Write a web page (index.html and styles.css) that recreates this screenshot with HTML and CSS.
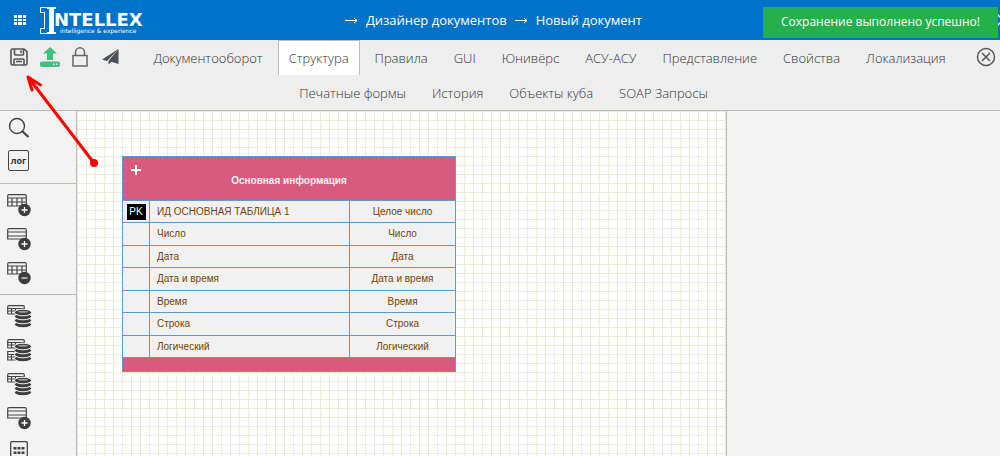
FILE: index.html
```html
<!DOCTYPE html>
<html lang="ru">
<head>
<meta charset="utf-8">
<title>Новый документ</title>
<link rel="stylesheet" href="styles.css">
</head>
<body>
<svg class="defs" aria-hidden="true">
  <defs>
    <g id="grid-table">
      <path d="M.7 12V2q0-1.3 1.3-1.3h16q1.3 0 1.3 1.3v10z" fill="#f3f3f3"/>
      <path d="M.7 12V2q0-1.3 1.3-1.3h16q1.3 0 1.3 1.3v10zM1 4h18M1 8h18M5 4v8M10 4v8M15 4v8" fill="none" stroke="#444" stroke-width="1.2"/>
    </g>
    <g id="row-table">
      <path d="M.7 11V2q0-1.3 1.3-1.3h16q1.3 0 1.3 1.3v9zM1 4h18M1 8h18" fill="none" stroke="#444" stroke-width="1.2"/>
    </g>
    <g id="plus">
      <circle cx="17.500" cy="16" r="6.200" fill="#3d3d3d"/>
      <path d="M17.500 13v6M14.500 16h6" stroke="#fff" stroke-width="1.300"/>
    </g>
    <g id="minus">
      <circle cx="17.500" cy="16" r="6.200" fill="#3d3d3d"/>
      <path d="M14.500 16h6" stroke="#ccc" stroke-width="1.500"/>
    </g>
    <g id="stack" fill="#3d3d3d" stroke="#f3f3f3">
      <ellipse cx="16" cy="19.500" rx="8.500" ry="3.300"/>
      <ellipse cx="16" cy="15.500" rx="8.500" ry="3.300"/>
      <ellipse cx="16" cy="11.500" rx="8.500" ry="3.300"/>
      <ellipse cx="16" cy="7.500" rx="8.500" ry="3.300"/>
      <ellipse cx="16" cy="6.700" rx="5" ry="1" stroke="none" fill="#999"/>
    </g>
  </defs>
</svg>

<header class="header">
  <button class="icon-button apps" aria-label="Меню">
    <svg width="12" height="10" fill="#fff"><path d="M0 0h3v3H0zM4 0h4v3H4zM9 0h3v3H9zM0 4h3v2H0zM4 4h4v2H4zM9 4h3v2H9zM0 7h3v3H0zM4 7h4v3H4zM9 7h3v3H9z"/></svg>
  </button>
  <a class="logo" href="#">
    <svg class="logo-mark" width="17" height="27" fill="none" stroke="#fff"><path d="M7 1h9M7 26h9" stroke-width="2"/><path d="M11.500 0v27" stroke-width="5"/><path d="M7 .5H.5v5h4v16h-4v5H7" stroke-width="1"/></svg>
    <span class="logo-text"><span class="logo-name">NTELLEX</span><span class="logo-tag">intelligence &amp; experience</span></span>
  </a>
  <nav class="crumbs" aria-label="Навигация">
    <svg class="arrow" width="13" height="7"><path d="M0 3.500h12M9 1l3 2.500L9 6" fill="none" stroke="#fff"/></svg>
    <a href="#">Дизайнер документов</a>
    <svg class="arrow" width="13" height="7"><path d="M0 3.500h12M9 1l3 2.500L9 6" fill="none" stroke="#fff"/></svg>
    <a href="#">Новый документ</a>
  </nav>
  <svg class="edge" width="12" height="14"><path d="M0 1l12 12M12 1L0 13" stroke="#fff" stroke-width="1.500"/></svg>
  <div class="toast" role="status">Сохранение выполнено успешно!</div>
</header>

<div class="toolbar">
  <div class="actions">
    <button class="icon-button" aria-label="Сохранить">
      <svg width="18" height="18" fill="none" stroke="#555" stroke-width="1.600"><path d="M1 2.500Q1 1 2.500 1H14l3 2.500v12q0 1.500-1.500 1.500h-13Q1 17 1 15.500zM4.500 1v5q0 1 1 1h7q1 0 1-1V1M4 17v-5q0-1 1-1h8q1 0 1 1v5M11 2.500v2.500M6 13.500h6"/></svg>
    </button>
    <button class="icon-button" aria-label="Опубликовать">
      <svg width="20" height="20" fill="#41bf83"><path d="M10 0l7 6.500h-4V13H7V6.500H3z"/><path fill-rule="evenodd" d="M2.500 14.500h15a2.500 2.500 0 0 1 0 5.500h-15a2.500 2.500 0 0 1 0-5.500zM13 16.500v1.500h1.500v-1.500zM16 16.500v1.500h1.500v-1.500z"/></svg>
    </button>
    <button class="icon-button" aria-label="Заблокировать">
      <svg width="16" height="20" fill="none" stroke="#666" stroke-width="1.500"><path d="M1 8.500h14V19H1zM3.500 8.500V5.500a4.500 4.700 0 0 1 9 0v3"/></svg>
    </button>
    <button class="icon-button send" aria-label="Отправить">
      <svg width="19" height="16"><path d="M18.500 0L2 10.500l5 1.500zM18.500 0L8.500 12v3.500l2.500-2.500zM18.500 0L10.500 12.500l8 2.500z" fill="#4c4f55"/></svg>
    </button>
  </div>
  <nav class="tabs" aria-label="Разделы">
    <div class="tab-row">
      <a href="#">Документооборот</a><a class="active" href="#" aria-current="page">Структура</a><a href="#">Правила</a><a href="#">GUI</a><a href="#">Юнивёрс</a><a href="#">АСУ-АСУ</a><a href="#">Представление</a><a href="#">Свойства</a><a href="#">Локализация</a>
    </div>
    <div class="tab-row second">
      <a href="#">Печатные формы</a><a href="#">История</a><a href="#">Объекты куба</a><a href="#">SOAP Запросы</a>
    </div>
  </nav>
  <button class="icon-button close" aria-label="Закрыть">
    <svg width="20" height="20" fill="none" stroke="#555" stroke-width="1.500"><circle cx="10" cy="10" r="8.500"/><path d="M6 6l8 8M14 6l-8 8"/></svg>
  </button>
</div>

<main class="workspace">
  <aside class="sidebar">
    <div class="tools top">
      <button class="icon-button" aria-label="Поиск"><svg width="24" height="22" fill="none" stroke="#444"><circle cx="10" cy="9" r="7.500" stroke-width="1.400"/><path d="M15 14l6.500 6" stroke-width="2.200"/></svg></button>
      <button class="icon-button log" aria-label="Лог">лог</button>
    </div>
    <div class="tools middle">
      <button class="icon-button" aria-label="Добавить таблицу"><svg width="25" height="23"><use href="#grid-table"/><use href="#plus"/></svg></button>
      <button class="icon-button" aria-label="Добавить строку"><svg width="25" height="23"><use href="#row-table"/><use href="#plus"/></svg></button>
      <button class="icon-button" aria-label="Удалить таблицу"><svg width="25" height="23"><use href="#grid-table"/><use href="#minus"/></svg></button>
    </div>
    <div class="tools bottom">
      <button class="icon-button" aria-label="Таблица в базу"><svg width="25" height="23"><path d="M.7 9V2q0-1.3 1.300-1.300h14q1.300 0 1.300 1.300v3M1 3.500h16M1 6h10M.7 9H9M4.500 4v5M8.500 4v5" fill="none" stroke="#444" stroke-width="1.200"/><use href="#stack"/></svg></button>
      <button class="icon-button" aria-label="Таблицы в базу"><svg width="25" height="23"><path d="M.7 9V2q0-1.3 1.300-1.300h14q1.300 0 1.300 1.300v3M1 3.500h16M1 6h10M.7 9H9M4.500 4v5M8.500 4v5M9 12.500H.7V21H9M1 15.500h8M1 18h8M4.500 15v6" fill="none" stroke="#444" stroke-width="1.200"/><use href="#stack"/></svg></button>
      <button class="icon-button" aria-label="Таблица из базы"><svg width="25" height="23"><path d="M.7 9V2q0-1.3 1.300-1.300h14q1.300 0 1.300 1.300v3M1 3.500h16M1 6h10M.7 9H9M4.500 4v5M8.500 4v5" fill="none" stroke="#444" stroke-width="1.200"/><use href="#stack"/></svg></button>
      <button class="icon-button" aria-label="Новая строка"><svg width="25" height="23"><use href="#row-table"/><use href="#plus"/></svg></button>
      <button class="icon-button keypad" aria-label="Сетка"><svg width="18" height="22"><rect x=".7" y=".7" width="16.600" height="20.600" rx="1" fill="none" stroke="#444" stroke-width="1.300"/><path d="M3.500 6h3v2.500h-3zM7.500 6h3v2.500h-3zM11.500 6h3v2.500h-3zM3.500 10.500h3V13h-3zM7.500 10.500h3V13h-3zM11.500 10.500h3V13h-3z" fill="#444"/></svg></button>
    </div>
  </aside>
  <section class="canvas">
    <table class="entity">
      <colgroup><col class="col-key"><col class="col-name"><col class="col-type"></colgroup>
      <thead>
        <tr><th colspan="3"><button class="icon-button add" aria-label="Добавить поле"><svg width="10" height="10"><path d="M5 0v10M0 5h10" stroke="#fff" stroke-width="2"/></svg></button>Основная информация</th></tr>
      </thead>
      <tbody>
        <tr><td><span class="pk">PK</span></td><td class="name">ИД ОСНОВНАЯ ТАБЛИЦА 1</td><td class="type">Целое число</td></tr>
        <tr><td></td><td class="name">Число</td><td class="type">Число</td></tr>
        <tr><td></td><td class="name">Дата</td><td class="type">Дата</td></tr>
        <tr><td></td><td class="name">Дата и время</td><td class="type">Дата и время</td></tr>
        <tr><td></td><td class="name">Время</td><td class="type">Время</td></tr>
        <tr><td></td><td class="name">Строка</td><td class="type">Строка</td></tr>
        <tr><td></td><td class="name">Логический</td><td class="type">Логический</td></tr>
      </tbody>
      <tfoot><tr><td colspan="3"></td></tr></tfoot>
    </table>
  </section>
  <aside class="details"></aside>
</main>

<svg class="pointer" width="76" height="96" aria-hidden="true"><path d="M69 88L3 2M3 2l4 13M3 2l12.500 8" fill="none" stroke="#f00" stroke-width="3" stroke-linecap="round"/><circle cx="69" cy="88" r="4" fill="#f00"/></svg>
</body>
</html>
```
FILE: styles.css
```css
* { box-sizing: border-box; }

body {
  margin: 0;
  height: 100vh;
  display: flex;
  flex-direction: column;
  overflow: hidden;
  position: relative;
  font: 13px/18px "Open Sans", sans-serif;
  color: #333;
  background: #f3f3f3;
}

a { color: inherit; text-decoration: none; }
svg { display: block; flex: none; }
.defs { position: absolute; width: 0; height: 0; }

.icon-button {
  display: block;
  padding: 0;
  border: 0;
  background: none;
  cursor: pointer;
}

.header {
  position: relative;
  flex: none;
  display: flex;
  align-items: center;
  height: 40px;
  padding-left: 14px;
  overflow: hidden;
  color: #fff;
  background: #0072c9;
}

.logo { display: flex; margin-left: 14px; }
.logo-text {
  display: flex;
  flex-direction: column;
  margin-left: -3px;
  padding-top: 5px;
  font-family: "DejaVu Sans", sans-serif;
}
.logo-name { font-size: 18px; line-height: 15px; font-weight: bold; }
.logo-tag { padding-left: 6px; font-size: 6px; line-height: 7px; white-space: nowrap; }

.crumbs {
  flex: 1;
  display: flex;
  align-items: center;
  justify-content: center;
  gap: 8px;
  padding-right: 156px;
}

.edge { position: absolute; right: -9px; top: 13px; }
.toast {
  position: absolute;
  top: 7px;
  right: 2px;
  padding: 6px 18px 7px;
  font-size: 12px;
  color: #fff;
  background: #24b14d;
}

.toolbar {
  flex: none;
  display: flex;
  align-items: flex-start;
  background: #eee;
  border-bottom: 1px solid #bbb;
}
.actions {
  display: flex;
  align-items: center;
  gap: 12px;
  padding: 7px 0 0 10px;
}
.tabs { flex: 1; padding-left: 4px; font-weight: 300; }
.tab-row { display: flex; justify-content: center; gap: 4px; }
.tab-row.second { padding-right: 92px; }
.tab-row a {
  height: 35px;
  padding: 8px 10px 0;
  border: 1px solid transparent;
  border-bottom: 0;
  white-space: nowrap;
}
.tab-row .active { background: #fff; border-color: #bbb; }
.close { padding: 7px 4px 0 0; }

.workspace { flex: 1; display: flex; min-height: 0; }

.sidebar {
  flex: none;
  width: 77px;
  overflow: hidden;
  border-right: 1px solid #bbb;
}
.tools {
  display: flex;
  flex-direction: column;
  align-items: flex-start;
  padding-left: 7px;
}
.tools.top { gap: 11px; padding-top: 6px; padding-bottom: 12px; border-bottom: 1px solid #bbb; }
.tools.middle { gap: 11px; padding-top: 10px; padding-bottom: 9px; border-bottom: 1px solid #bbb; }
.tools.bottom { gap: 11px; padding-top: 10px; }
.log {
  width: 21px;
  height: 21px;
  margin-left: 1px;
  border: 1px solid #444;
  border-radius: 2px;
  font: bold 9px/16px "Open Sans", sans-serif;
  color: #333;
}
.keypad { margin-left: 3px; }

.canvas {
  flex: 650;
  position: relative;
  border-right: 1px solid #bbb;
  background-color: #fff;
  background-image:
    linear-gradient(#e6eedb 1px, transparent 1px),
    linear-gradient(90deg, #e6eedb 1px, transparent 1px);
  background-size: 9px 9px;
}
.details { flex: 273; }

.entity {
  position: absolute;
  left: 45px;
  top: 45px;
  width: 333px;
  table-layout: fixed;
  border-collapse: collapse;
  font: 10px/12px "Liberation Sans", sans-serif;
  color: #744400;
  background: #f1f1f1;
}
.entity th, .entity td { padding: 0; border: 1px solid #5b9bd5; }
.entity th {
  position: relative;
  height: 44px;
  padding-top: 4px;
  color: #f5f0f2;
  background: #d75b7d;
}
.add { position: absolute; left: 8px; top: 8px; }
.entity tbody tr { height: 23px; }
.entity tbody tr:nth-child(odd) { height: 22px; }
.col-key { width: 27px; }
.col-name { width: 200px; }
.col-type { width: 106px; }
.entity .name { padding-left: 7px; }
.entity .type { text-align: center; }
.entity tfoot td { height: 14px; background: #d75b7d; }
.pk {
  display: block;
  width: 19px;
  margin: 0 auto;
  line-height: 16px;
  text-align: center;
  color: #fff;
  background: #000;
}

.pointer { position: absolute; left: 25px; top: 75px; pointer-events: none; }
```
